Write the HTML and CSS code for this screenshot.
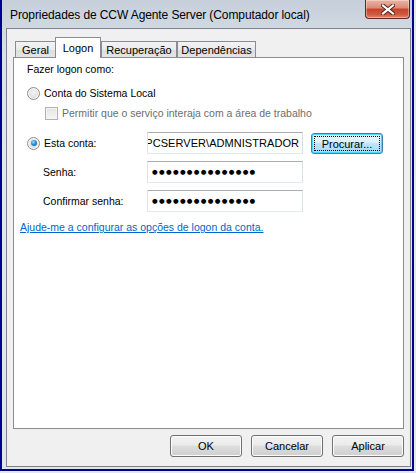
FILE: index.html
```html
<!DOCTYPE html>
<html lang="pt">
<head>
<meta charset="utf-8">
<title>Propriedades de CCW Agente Server</title>
<link rel="stylesheet" href="styles.css">
</head>
<body>
<div class="screen">
  <div class="frame">
    <div class="titlebar">
      <span class="title">Propriedades de CCW Agente Server (Computador local)</span>
      <div class="close">
        <svg width="14" height="11" viewBox="0 0 14 11">
          <path d="M2 1.5 L12 9.5 M12 1.5 L2 9.5" stroke="#4a2018" stroke-width="4" stroke-linecap="square"/>
          <path d="M2 1.5 L12 9.5 M12 1.5 L2 9.5" stroke="#ffffff" stroke-width="2.2" stroke-linecap="square"/>
        </svg>
      </div>
    </div>
    <div class="client">
      <div class="tabs">
        <div class="tab t-geral">Geral</div>
        <div class="tab t-logon active">Logon</div>
        <div class="tab t-rec">Recuperação</div>
        <div class="tab t-dep">Dependências</div>
      </div>
      <div class="panel">
        <div class="heading">Fazer logon como:</div>
        <div class="opt-row"><span class="radio"></span><span>Conta do Sistema Local</span></div>
        <div class="check-row"><span class="check"></span><span>Permitir que o serviço interaja com a área de trabalho</span></div>
        <div class="account">
          <div class="opt-row"><span class="radio checked"></span><span>Esta conta:</span></div>
          <div class="field"><span class="field-text">PCSERVER\ADMNISTRADOR</span></div>
          <div class="btn focus"><span class="focus-ring">Procurar...</span></div>
          <div class="label">Senha:</div>
          <div class="field pw"><span class="dots">●●●●●●●●●●●●●●●</span></div>
          <div></div>
          <div class="label">Confirmar senha:</div>
          <div class="field pw"><span class="dots">●●●●●●●●●●●●●●●</span></div>
          <div></div>
        </div>
        <a class="link" href="#">Ajude-me a configurar as opções de logon da conta.</a>
      </div>
      <div class="buttons">
        <div class="btn">OK</div>
        <div class="btn">Cancelar</div>
        <div class="btn">Aplicar</div>
      </div>
    </div>
  </div>
</div>
</body>
</html>
```
FILE: styles.css
```css
* { box-sizing: border-box; }
html, body { margin: 0; padding: 0; }
body {
  font-family: "Liberation Sans", Arial, sans-serif;
  font-size: 10.5px;
  color: #000;
  background: #dfe5ec;
}
.screen {
  width: 416px;
  height: 473px;
  padding: 0 2px 2px 0;
  background: #e4e9ef;
}
.frame {
  width: 414px;
  height: 471px;
  border: 2px solid #000090;
  border-top: 0;
  padding: 0 1px 2px 4px;
  background: linear-gradient(180deg, #c6cfda 0%, #dae1e9 12%, #e3e8ee 40%, #dfe5eb 100%);
  display: flex;
  flex-direction: column;
}
.titlebar {
  height: 28px;
  position: relative;
  display: flex;
  align-items: center;
  padding-left: 4px;
}
.title {
  font-size: 12px;
  color: #000;
  margin-top: 2px;
  letter-spacing: -0.1px;
}
.close {
  position: absolute;
  right: 1px;
  top: 0;
  width: 45px;
  height: 19px;
  border: 1px solid #5c2a22;
  border-top: 0;
  border-radius: 0 0 4px 4px;
  background: linear-gradient(180deg, #eab3a5 0%, #db8a75 45%, #c4432b 50%, #cf5a3d 80%, #e0876a 100%);
  display: flex;
  align-items: center;
  justify-content: center;
  box-shadow: inset 0 0 0 1px rgba(255,255,255,0.35);
}
.client {
  flex: 1;
  border: 1px solid #7d8389;
  background: #f0f0f0;
  padding: 8px 6px 9px 6px;
  display: flex;
  flex-direction: column;
}
.tabs {
  height: 20px;
  display: flex;
  align-items: flex-end;
  padding-left: 2px;
  position: relative;
  z-index: 1;
}
.tab {
  height: 16px;
  border: 1px solid #898c95;
  border-bottom: 0;
  background: linear-gradient(180deg, #f3f3f3 0%, #ebebeb 50%, #dedede 51%, #e4e4e4 100%);
  display: flex;
  align-items: center;
  justify-content: center;
  line-height: 14px;
  padding-top: 1px;
  font-size: 11px;
}
.t-geral { width: 41px; }
.t-logon { width: 46px; margin-left: -1px; }
.t-rec { width: 76px; }
.t-dep { width: 79px; }
.tab.active {
  height: 21px;
  margin-bottom: -1px;
  background: #ffffff;
  align-items: flex-start;
  padding-top: 3px;
}
.panel {
  height: 372px;
  border: 1px solid #898c95;
  background: #ffffff;
  padding: 3px 6px 0 6px;
  display: flex;
  flex-direction: column;
  align-items: flex-start;
}
.heading {
  line-height: 16px;
  margin-left: 7px;
}
.opt-row {
  display: flex;
  align-items: center;
  height: 16px;
  gap: 4px;
}
.panel > .opt-row {
  margin-left: 7px;
  margin-top: 8px;
}
.radio {
  width: 13px;
  height: 13px;
  border-radius: 50%;
  border: 1px solid #8f8f8f;
  background: radial-gradient(circle at 50% 40%, #f4f4f4 0%, #e2e2e2 55%, #cfcfcf 100%);
  box-shadow: inset 0 0 0 1px #f8f8f8;
  display: inline-flex;
  align-items: center;
  justify-content: center;
  flex: none;
}
.radio.checked::after {
  content: "";
  width: 6px;
  height: 6px;
  border-radius: 50%;
  background: radial-gradient(circle at 40% 35%, #9fe0ff 0%, #2a8fd8 45%, #0b4d8f 100%);
}
.check-row {
  display: flex;
  align-items: center;
  height: 16px;
  gap: 4px;
  margin-left: 25px;
  margin-top: 4px;
  color: #6d6d6d;
}
.check {
  width: 13px;
  height: 13px;
  border: 1px solid #b1b1b1;
  background: linear-gradient(180deg, #e4e4e4, #f6f6f6);
  box-shadow: inset 0 0 0 1px #f4f4f4;
  flex: none;
}
.account {
  margin-top: 11px;
  margin-left: 7px;
  display: grid;
  grid-template-columns: 112px 156px 72px;
  grid-auto-rows: 22px;
  column-gap: 8px;
  row-gap: 7px;
  align-items: center;
}
.label {
  padding-left: 16px;
  line-height: 16px;
}
.field {
  height: 22px;
  border: 1px solid #abadb3;
  border-color: #abadb3 #dbdfe6 #e3e9ef #e2e3ea;
  background: #fff;
  overflow: hidden;
  display: flex;
  align-items: center;
  justify-content: flex-end;
  padding: 0 3px 0 3px;
  white-space: nowrap;
  min-width: 0;
}
.field-text {
  flex: none;
  font-size: 11px;
  letter-spacing: 0.05px;
}
.field.pw { justify-content: flex-start; }
.dots {
  font-family: "DejaVu Sans", sans-serif;
  font-size: 6.5px;
  letter-spacing: 1.3px;
  line-height: 10px;
  padding-left: 1px;
}
.btn {
  height: 22px;
  border: 1px solid #707070;
  border-radius: 3px;
  background: linear-gradient(180deg, #f2f2f2 0%, #ebebeb 45%, #dddddd 50%, #cfcfcf 100%);
  box-shadow: inset 0 0 0 1px #fcfcfc;
  display: flex;
  align-items: center;
  justify-content: center;
  line-height: 14px;
  font-size: 11px;
}
.account .btn { height: 21px; align-self: start; margin-top: 1px; }
.btn.focus {
  border-color: #3c7fb1;
  background: linear-gradient(180deg, #eaf6fd 0%, #d9f0fc 45%, #bee6fd 50%, #a7d9f5 100%);
  box-shadow: inset 0 0 0 1px #48d8fb;
  padding: 2px;
}
.focus-ring {
  flex: 1;
  align-self: stretch;
  border: 1px dotted #000;
  display: flex;
  align-items: center;
  justify-content: center;
}
.link {
  margin-top: 7px;
  line-height: 16px;
  color: #0066cc;
  text-decoration: underline;
}
.buttons {
  margin-top: 6px;
  display: flex;
  justify-content: flex-end;
  gap: 9px;
}
.buttons .btn { width: 72px; }
```
